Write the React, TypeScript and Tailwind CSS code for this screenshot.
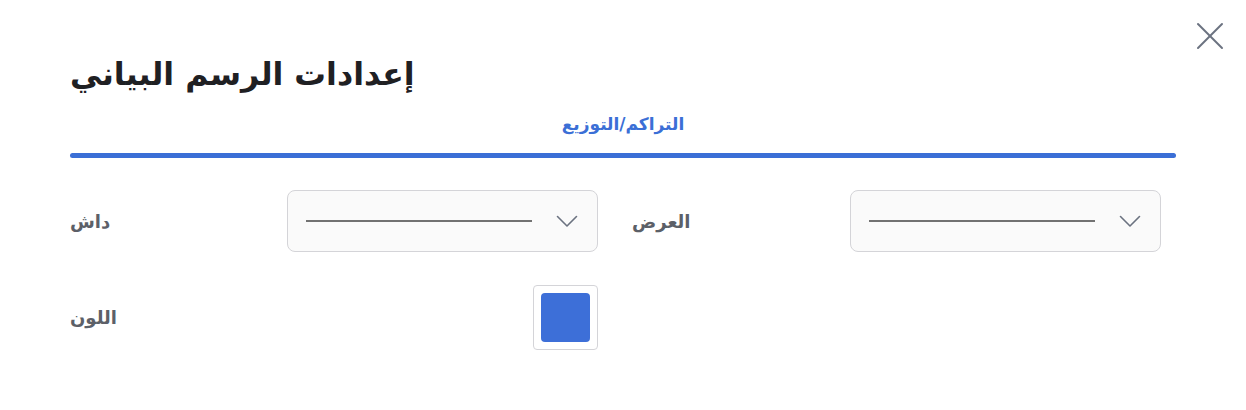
import { X } from 'lucide-react';

const font = { fontFamily: '"DejaVu Sans", "Noto Sans", sans-serif' };

function LineSelect() {
  return (
    <button className="flex items-center w-[311px] h-[62px] rounded-lg border border-[#d4d4d8] bg-[#fafafa] pl-[18px] pr-[18px]">
      <span className="block w-[226px] h-[2px] bg-[#727272]" />
      <svg className="ml-auto mr-[1px]" width="22" height="13" viewBox="0 0 22 13" fill="none">
        <path d="M1.5 1.5 11 11 20.5 1.5" stroke="#6b7280" strokeWidth="1.6" strokeLinecap="round" strokeLinejoin="round" />
      </svg>
    </button>
  );
}

export default function App() {
  return (
    <div className="relative w-[1246px] h-[410px] bg-white" style={font}>
      {/* Close */}
      <button className="absolute top-[12px] right-[12px] text-[#6b7280]">
        <X className="w-12 h-12" strokeWidth={1} />
      </button>

      <div className="px-[70px] pt-[50px]">
        <h2 className="text-[31.6px] leading-[48px] font-bold text-[#1f2023]">إعدادات الرسم البياني</h2>

        {/* Tab */}
        <div className="mt-[14px]">
          <p className="text-center text-[17px] font-semibold text-[#3b6fd6] leading-[24px]">التراكم/التوزيع</p>
          <div className="mt-[17px] h-[5px] rounded-full bg-[#3b6fd6]" />
        </div>

        {/* Fields */}
        <div className="mt-[32px] grid grid-cols-[528px_529px] gap-x-[34px] gap-y-[33px]">
          <div className="flex items-center justify-between">
            <span className="text-[18px] font-bold text-[#5c6068]">داش</span>
            <LineSelect />
          </div>
          <div className="flex items-center justify-between">
            <span className="text-[18px] font-bold text-[#5c6068]">العرض</span>
            <LineSelect />
          </div>
          <div className="flex items-center justify-between">
            <span className="text-[18px] font-bold text-[#5c6068]">اللون</span>
            <div className="w-[65px] h-[65px] border border-[#d4d4d8] rounded-sm p-[7px]">
              <div className="w-full h-full rounded-[4px] bg-[#3d6fd8]" />
            </div>
          </div>
        </div>
      </div>
    </div>
  );
}
